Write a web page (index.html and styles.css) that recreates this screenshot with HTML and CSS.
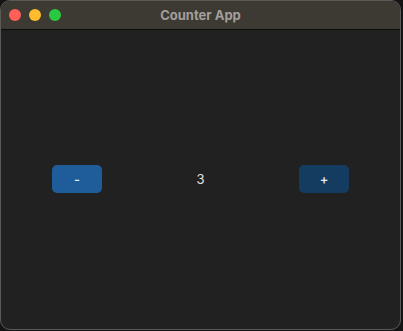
FILE: index.html
```html
<!DOCTYPE html>
<html lang="en">
<head>
    <meta charset="UTF-8">
    <meta name="viewport" content="width=device-width, initial-scale=1.0">
    <title>Counter App</title>
    <link rel="stylesheet" href="styles.css">
</head>
<body>

    <div class="window">
        <div class="titlebar">
            <div class="lights">
                <span class="light red"></span>
                <span class="light yellow"></span>
                <span class="light green"></span>
            </div>
            <div class="title">Counter App</div>
        </div>

        <div class="content">
            <button class="btn minus" id="dec">-</button>
            <span class="count" id="count">3</span>
            <button class="btn plus" id="inc">+</button>
        </div>
    </div>

    <script>
        let count = 3;
        const label = document.getElementById('count');

        document.getElementById('dec').addEventListener('click', () => {
            count--;
            label.textContent = count;
        });
        document.getElementById('inc').addEventListener('click', () => {
            count++;
            label.textContent = count;
        });
    </script>

</body>
</html>
```

FILE: styles.css
```css
* {
    box-sizing: border-box;
}

html, body {
    margin: 0;
    height: 100%;
    background-color: #141414;
}

body {
    font-family: "Inter", "Liberation Sans", sans-serif;
}

.window {
    width: 401px;
    height: 330px;
    border: 1px solid #5c5a57;
    border-radius: 10px;
    overflow: hidden;
    display: flex;
    flex-direction: column;
    background-color: #212121;
}

.titlebar {
    height: 29px;
    flex-shrink: 0;
    background-color: #3d3933;
    border-bottom: 1px solid #0c0c0c;
    display: flex;
    align-items: center;
    position: relative;
}

.lights {
    display: flex;
    gap: 8px;
    padding-left: 8px;
}

.light {
    width: 12px;
    height: 12px;
    border-radius: 50%;
}

.red { background-color: #fe5f57; }
.yellow { background-color: #febc2e; }
.green { background-color: #28c840; }

.title {
    position: absolute;
    left: 0;
    right: 0;
    text-align: center;
    font-size: 13px;
    font-weight: 700;
    color: #a29f9b;
    pointer-events: none;
}

.content {
    flex: 1;
    display: flex;
    align-items: center;
    justify-content: space-between;
    padding: 0 51px 1px 51px;
}

.btn {
    width: 50px;
    height: 28px;
    border: none;
    border-radius: 5px;
    color: #e8eef5;
    font-family: inherit;
    font-size: 13px;
    font-weight: 500;
    cursor: pointer;
}

.minus {
    background-color: #1e5d99;
}

.plus {
    background-color: #143c61;
}

.count {
    color: #e2e2e2;
    font-size: 13px;
}
```
